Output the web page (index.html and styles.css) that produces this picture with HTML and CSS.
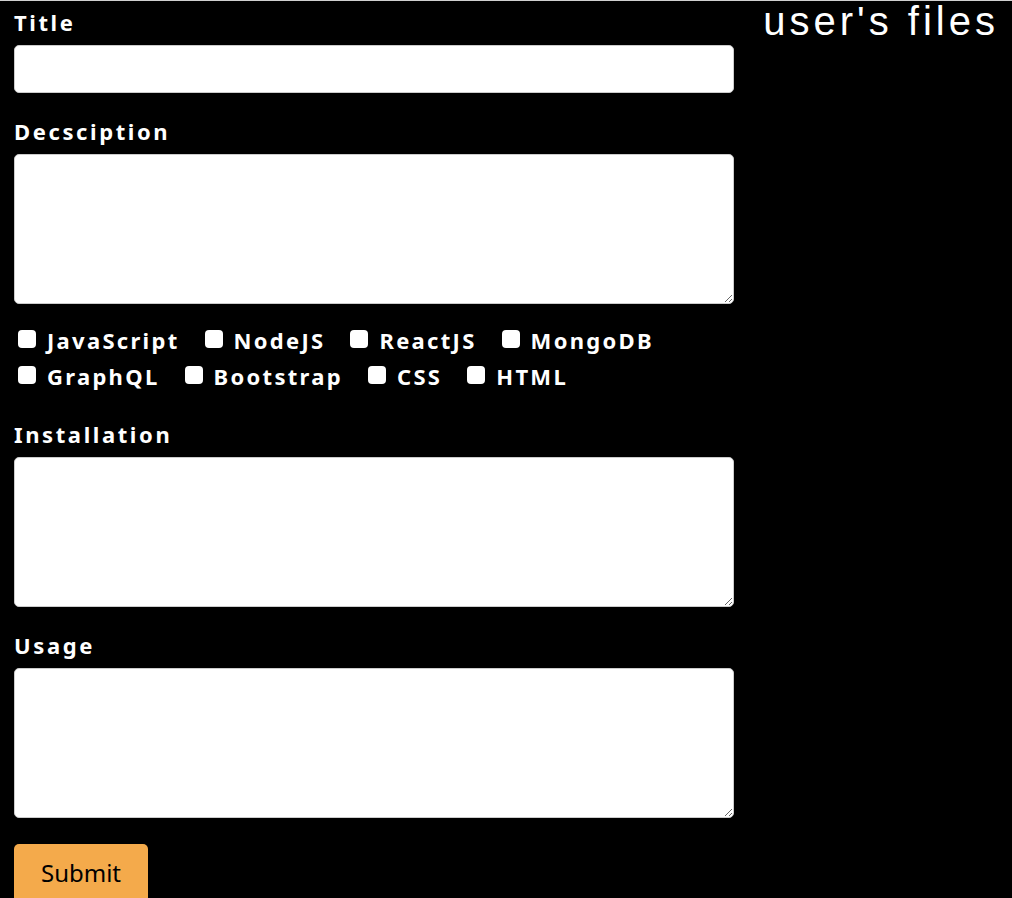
FILE: index.html
```html
<!DOCTYPE html>
<html lang="en">
<head>
<meta charset="utf-8">
<title>README generator</title>
<link rel="stylesheet" href="styles.css">
</head>
<body>
<div class="page">
  <form class="form">
    <label class="field-label" for="title">Title</label>
    <input class="text-input" id="title" type="text">

    <label class="field-label" for="desc">Decsciption</label>
    <textarea class="text-area" id="desc"></textarea>

    <div class="techs">
      <label class="tech"><input type="checkbox" class="check">JavaScript</label>
      <label class="tech"><input type="checkbox" class="check">NodeJS</label>
      <label class="tech"><input type="checkbox" class="check">ReactJS</label>
      <label class="tech"><input type="checkbox" class="check">MongoDB</label>
      <label class="tech"><input type="checkbox" class="check">GraphQL</label>
      <label class="tech"><input type="checkbox" class="check">Bootstrap</label>
      <label class="tech"><input type="checkbox" class="check">CSS</label>
      <label class="tech"><input type="checkbox" class="check">HTML</label>
    </div>

    <label class="field-label" for="install">Installation</label>
    <textarea class="text-area" id="install"></textarea>

    <label class="field-label" for="usage">Usage</label>
    <textarea class="text-area" id="usage"></textarea>

    <button class="submit" type="button">Submit</button>
  </form>
  <aside class="files">
    <h2 class="files-title">user's files</h2>
  </aside>
</div>
</body>
</html>
```

FILE: styles.css
```css
html, body {
  margin: 0;
  padding: 0;
  background: #000;
}

body {
  border-top: 1px solid #d0d0d0;
  font-family: "Comic Sans MS", "Noto Sans", sans-serif;
  color: #fff;
}

.page {
  display: flex;
  align-items: flex-start;
}

.form {
  width: 720px;
  padding-left: 14px;
  display: flex;
  flex-direction: column;
}

.field-label {
  font-weight: 700;
  font-size: 22px;
  letter-spacing: 2.6px;
  line-height: 30px;
  margin-top: 23px;
  margin-bottom: 8px;
}

.field-label:first-child {
  margin-top: 6px;
}

.text-input,
.text-area {
  box-sizing: border-box;
  width: 720px;
  background: #fff;
  border: 1px solid #ccc;
  border-radius: 5px;
  font: inherit;
  color: #000;
  margin: 0;
}

.text-input {
  height: 48px;
}

.text-area {
  height: 150px;
  resize: vertical;
}

.techs {
  display: flex;
  flex-wrap: wrap;
  column-gap: 21px;
  margin-top: 18px;
  margin-bottom: 2px;
  width: 720px;
}

.tech {
  display: flex;
  align-items: center;
  font-weight: 700;
  font-size: 22px;
  letter-spacing: 2.3px;
  line-height: 36px;
}

.check {
  appearance: none;
  -webkit-appearance: none;
  width: 18px;
  height: 18px;
  margin: 0 11px 3px 4px;
  background: #fff;
  border-radius: 4px;
}

.submit {
  align-self: flex-start;
  margin-top: 26px;
  width: 134px;
  height: 62px;
  background: #f4aa4b;
  border: none;
  border-radius: 5px;
  font: inherit;
  font-size: 24px;
  color: #000;
  padding: 0 0 6px;
}

.files {
  flex: 1;
  text-align: right;
  padding-right: 13px;
}

.files-title {
  margin: 0;
  font-family: "Liberation Sans", Arial, sans-serif;
  font-weight: 400;
  font-size: 40px;
  letter-spacing: 4px;
  line-height: 40px;
}
```
